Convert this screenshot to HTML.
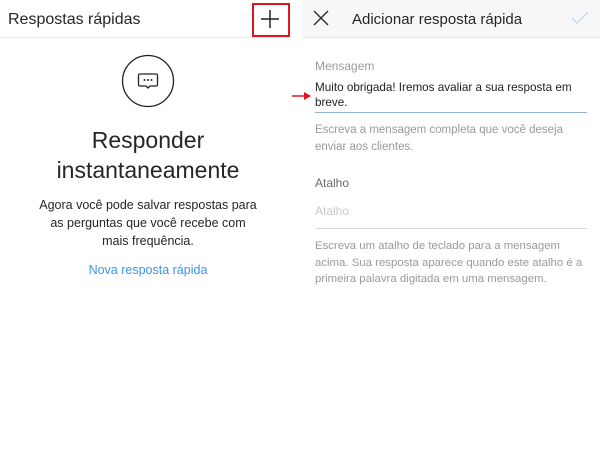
<!DOCTYPE html>
<html><head><meta charset="utf-8"><style>
body{margin:0;width:600px;height:469px;background:#fff;position:relative;overflow:hidden;font-family:"Liberation Sans",sans-serif;}
.a{position:absolute;white-space:nowrap;}
</style></head><body>
<div class="a" style="left:8px;top:11px;font-size:16px;color:#262626;">Respostas rápidas</div>
<div class="a" style="left:0;top:37px;width:292px;height:1px;background:#ececec"></div>
<div class="a" style="left:252px;top:3px;width:34px;height:30px;border:2px solid #e0141e"></div>
<svg class="a" style="left:259px;top:8px" width="22" height="22"><path d="M11 2V20M2 11H20" stroke="#222" stroke-width="1.5"/></svg>
<svg class="a" style="left:121px;top:54px" width="54" height="54"><circle cx="27" cy="27" r="25.5" fill="none" stroke="#222" stroke-width="1.3"/><path d="M19 20h16a1.5 1.5 0 0 1 1.5 1.5v9a1.5 1.5 0 0 1-1.5 1.5h-6l-2 2-2-2h-6a1.5 1.5 0 0 1-1.5-1.5v-9a1.5 1.5 0 0 1 1.5-1.5z" fill="none" stroke="#222" stroke-width="1.3"/><circle cx="23.5" cy="26" r="1" fill="#222"/><circle cx="27" cy="26" r="1" fill="#222"/><circle cx="30.5" cy="26" r="1" fill="#222"/></svg>
<div class="a" style="left:0;width:296px;top:125px;text-align:center;font-size:23px;line-height:30px;color:#262626;">Responder<br>instantaneamente</div>
<div class="a" style="left:0;width:296px;top:196px;text-align:center;font-size:12.5px;line-height:18px;color:#262626;">Agora você pode salvar respostas para<br>as perguntas que você recebe com<br>mais frequência.</div>
<div class="a" style="left:0;width:296px;top:263px;text-align:center;font-size:12.5px;color:#3897f0;">Nova resposta rápida</div>

<div class="a" style="left:302px;top:0;width:298px;height:37px;background:#f7f7f7;border-bottom:1px solid #e6e6e6"></div>
<svg class="a" style="left:312px;top:9px" width="18" height="18"><path d="M2 2L16 16M16 2L2 16" stroke="#333" stroke-width="1.5"/></svg>
<div class="a" style="left:352px;top:11px;font-size:15px;color:#262626;">Adicionar resposta rápida</div>
<svg class="a" style="left:570px;top:10px" width="20" height="16"><path d="M2 8L7 13L18 2" fill="none" stroke="#c4dcf2" stroke-width="1.5"/></svg>
<div class="a" style="left:315px;top:59px;font-size:12px;color:#9a9a9a;">Mensagem</div>
<div class="a" style="left:315px;top:81px;font-size:11.7px;line-height:14.5px;color:#222;">Muito obrigada! Iremos avaliar a sua resposta em<br>breve.</div>
<div class="a" style="left:315px;top:112px;width:272px;height:1px;background:#8fb3d8"></div>
<svg class="a" style="left:292px;top:91px" width="20" height="10"><path d="M0 5H14" stroke="#e0141e" stroke-width="1.5"/><path d="M12 1L19 5L12 9Z" fill="#e0141e"/></svg>
<div class="a" style="left:315px;top:122px;font-size:11.5px;line-height:16.5px;color:#9a9a9a;">Escreva a mensagem completa que você deseja<br>enviar aos clientes.</div>
<div class="a" style="left:315px;top:176px;font-size:12px;color:#6a6a6a;">Atalho</div>
<div class="a" style="left:315px;top:204px;font-size:12px;color:#c8c8c8;">Atalho</div>
<div class="a" style="left:315px;top:228px;width:272px;height:1px;background:#dcdcdc"></div>
<div class="a" style="left:315px;top:238px;font-size:11.4px;line-height:16.5px;color:#9a9a9a;">Escreva um atalho de teclado para a mensagem<br>acima. Sua resposta aparece quando este atalho é a<br>primeira palavra digitada em uma mensagem.</div>
</body></html>
